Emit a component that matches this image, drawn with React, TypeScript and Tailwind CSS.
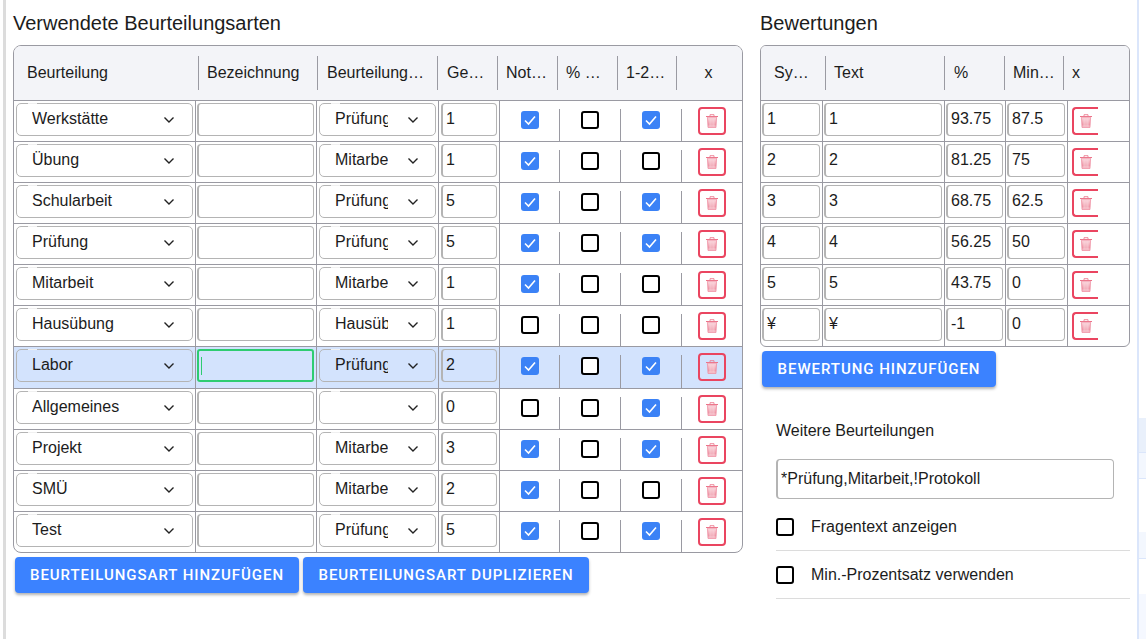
const selectRows = [
  { name: "Werkstätte", type: "Prüfung", weight: "1", a: true, b: false, c: true },
  { name: "Übung", type: "Mitarbeit", weight: "1", a: true, b: false, c: false },
  { name: "Schularbeit", type: "Prüfung", weight: "5", a: true, b: false, c: true },
  { name: "Prüfung", type: "Prüfung", weight: "5", a: true, b: false, c: true },
  { name: "Mitarbeit", type: "Mitarbeit", weight: "1", a: true, b: false, c: false },
  { name: "Hausübung", type: "Hausübung", weight: "1", a: false, b: false, c: false },
  { name: "Labor", type: "Prüfung", weight: "2", a: true, b: false, c: true, active: true },
  { name: "Allgemeines", type: "", weight: "0", a: false, b: false, c: true },
  { name: "Projekt", type: "Mitarbeit", weight: "3", a: true, b: false, c: true },
  { name: "SMÜ", type: "Mitarbeit", weight: "2", a: true, b: false, c: false },
  { name: "Test", type: "Prüfung", weight: "5", a: true, b: false, c: true },
];

const gradeRows = [
  ["1", "1", "93.75", "87.5"],
  ["2", "2", "81.25", "75"],
  ["3", "3", "68.75", "62.5"],
  ["4", "4", "56.25", "50"],
  ["5", "5", "43.75", "0"],
  ["¥", "¥", "-1", "0"],
];

function Chevron() {
  return (
    <svg viewBox="0 0 12 8" className="w-[12px] h-[8px] shrink-0 text-[#222]" fill="none" stroke="currentColor" strokeWidth="1.4">
      <path d="M1.500 1.500 6 6l4.500-4.500" />
    </svg>
  );
}

function Trash() {
  return (
    <svg viewBox="0 0 12 14" className="w-[12px] h-[14px]">
      <defs>
        <linearGradient id="trashFill" x1="0" y1="0" x2="0" y2="1">
          <stop offset="0" stopColor="#fbd5dc" />
          <stop offset="0.7" stopColor="#ee98a8" />
          <stop offset="1" stopColor="#f8c6d0" />
        </linearGradient>
      </defs>
      <path d="M4 2V.7h4V2" fill="none" stroke="#ec7f93" strokeWidth=".9" />
      <path d="M0 2.500h12" stroke="#ec7389" strokeWidth="1" />
      <path d="M1.400 3.200h9.200l-.6 10.300H2z" fill="url(#trashFill)" stroke="#ee8a9d" strokeWidth=".7" />
      <path d="M4.100 4.500v7.800M6 4.500v7.800M7.900 4.500v7.800" stroke="#fbe3e7" strokeWidth=".7" />
    </svg>
  );
}

function Check({ on }: { on: boolean }) {
  if (!on) return <span className="block w-[18px] h-[18px] rounded-[3px] border-2 border-black bg-white" />;
  return (
    <span className="flex items-center justify-center w-[18px] h-[18px] rounded-[3px] bg-[#3b82f6]">
      <svg viewBox="0 0 18 18" className="w-[18px] h-[18px]" fill="none" stroke="#fff" strokeWidth="1.6">
        <path d="M4 9.500 7.500 13 14 5.500" />
      </svg>
    </span>
  );
}

function SelectBox({ value, narrow }: { value: string; narrow?: boolean }) {
  return (
    <div className="relative flex items-center h-[33px] w-full rounded-[5px] border border-[#b4b4b4] pb-[2px]">
      <span className="absolute -top-px left-[11px] w-[9px] h-px bg-white/80" />
      <span className={`block overflow-hidden whitespace-nowrap ml-[15px] ${narrow ? "w-[53px]" : "flex-1"}`}>{value || "\u00a0"}</span>
      <span className={`ml-auto mt-[2px] ${narrow ? "mr-[16px]" : "mr-[17px]"}`}><Chevron /></span>
    </div>
  );
}

function TextBox({ value, focused }: { value: string; focused?: boolean }) {
  if (focused) {
    return (
      <div className="flex items-center h-[33px] w-full rounded-[3px] border-2 border-[#2ecc71] pl-[2px]">
        <span className="block w-px h-[18px] bg-[#2ecc71]" />
      </div>
    );
  }
  return (
    <div className="flex items-center h-[33px] w-full rounded-[4px] border border-l-2 border-[#b4b4b4] pl-[3px] pb-[2px] whitespace-nowrap overflow-hidden">
      {value}
    </div>
  );
}

function TrashButton({ cut }: { cut?: boolean }) {
  return (
    <div className={`flex items-center justify-center h-[28px] border-2 border-[#ea4560] ${cut ? "w-[26px] rounded-l-[4px] border-r-0" : "w-[28px] rounded-[4px]"}`}>
      <Trash />
    </div>
  );
}

function HeadCell({ label, className }: { label: string; className: string }) {
  return (
    <div className={`flex items-center h-[34px] border-r border-[#9a9aa2] whitespace-nowrap ${className}`}>
      {label}
    </div>
  );
}

function BlueButton({ label, className }: { label: string; className: string }) {
  return (
    <button className={`h-[36px] rounded-[4px] bg-[#3b82ff] text-white text-[15px] font-medium tracking-[0.95px] shadow-[0_2px_3px_rgba(0,0,0,0.3)] font-['Roboto',sans-serif] ${className}`}>
      {label}
    </button>
  );
}

function CheckCell({ on, width }: { on: boolean; width: string }) {
  return (
    <div className={`h-full pt-[8px] ${width}`}>
      <div className="flex justify-center h-full pt-[2px] border-r border-[#9a9aa2]">
        <Check on={on} />
      </div>
    </div>
  );
}

export default function App() {
  return (
    <div className="flex h-[639px] w-[1146px] overflow-hidden bg-white text-[16px] text-[#1c1c1c] font-['Liberation_Sans',Arial,sans-serif]">
      <div className="w-[3px] shrink-0" />
      <div className="w-[3px] shrink-0 bg-[#dcdcdc]" />
      <div className="flex w-[1131px] shrink-0 pl-[7px] pt-[12px]">
        <section className="w-[730px] shrink-0">
          <h2 className="text-[20px] leading-[23px] mb-[10px]">Verwendete Beurteilungsarten</h2>
          <div className="rounded-[8px] border border-[#9a9aa2] overflow-hidden">
            <div className="flex items-center h-[55px] bg-[#f3f4f8] border-b border-[#9a9aa2]">
              <HeadCell label="Beurteilung" className="w-[185px] pl-[13px]" />
              <HeadCell label="Bezeichnung" className="w-[119px] pl-[8px]" />
              <HeadCell label="Beurteilung…" className="w-[120px] pl-[9px]" />
              <HeadCell label="Ge…" className="w-[60px] pl-[9px]" />
              <HeadCell label="Not…" className="w-[60px] pl-[8px]" />
              <HeadCell label="% …" className="w-[60px] pl-[8px]" />
              <HeadCell label="1-2…" className="w-[59px] pl-[8px]" />
              <div className="flex-1 text-center pr-[2px]">x</div>
            </div>
            {selectRows.map((r, i) => (
              <div
                key={r.name}
                className={`flex ${i === selectRows.length - 1 ? "h-[40px]" : r.active ? "h-[42px] border-b border-[#9a9aa2]" : "h-[41px] border-b border-[#9a9aa2]"} ${r.active ? "bg-[#d3e3fd]" : ""}`}
              >
                <div className="flex items-start w-[182px] h-full border-r border-[#9a9aa2] px-[2px] pt-[2px]">
                  <SelectBox value={r.name} />
                </div>
                <div className="flex items-start w-[121px] h-full border-r border-[#9a9aa2] pl-[1px] pr-[2px] pt-[2px]">
                  <TextBox value="" focused={r.active} />
                </div>
                <div className="flex items-start w-[122px] h-full border-r border-[#9a9aa2] px-[2px] pt-[2px]">
                  <SelectBox value={r.type} narrow />
                </div>
                <div className="flex items-start w-[61px] h-full border-r border-[#9a9aa2] pl-[2px] pr-[2px] pt-[2px]">
                  <TextBox value={r.weight} />
                </div>
                <CheckCell on={r.a} width="w-[60px]" />
                <CheckCell on={r.b} width="w-[61px]" />
                <CheckCell on={r.c} width="w-[61px]" />
                <div className="flex-1 flex justify-center pt-[6px]">
                  <TrashButton />
                </div>
              </div>
            ))}
          </div>
          <div className="flex gap-[4px] pl-[2px] mt-[4px]">
            <BlueButton label="BEURTEILUNGSART HINZUFÜGEN" className="w-[284px]" />
            <BlueButton label="BEURTEILUNGSART DUPLIZIEREN" className="w-[286px]" />
          </div>
        </section>

        <section className="ml-[17px] w-[370px] shrink-0">
          <h2 className="text-[20px] leading-[23px] mb-[10px]">Bewertungen</h2>
          <div className="rounded-[6px] border border-[#9a9aa2] overflow-hidden">
            <div className="flex items-center h-[55px] bg-[#f3f4f8] border-b border-[#9a9aa2]">
              <HeadCell label="Sy…" className="w-[65px] pl-[13px]" />
              <HeadCell label="Text" className="w-[119px] pl-[8px]" />
              <HeadCell label="%" className="w-[60px] pl-[9px]" />
              <HeadCell label="Min…" className="w-[59px] pl-[8px]" />
              <div className="flex-1 pl-[8px]">x</div>
            </div>
            {gradeRows.map((r, i) => (
              <div key={i} className={`flex ${i < gradeRows.length - 1 ? "h-[41px] border-b border-[#9a9aa2]" : "h-[40px]"}`}>
                <div className="flex items-start w-[62px] h-full border-r border-[#9a9aa2] pl-[1px] pr-[2px] pt-[2px]"><TextBox value={r[0]} /></div>
                <div className="flex items-start w-[122px] h-full border-r border-[#9a9aa2] pl-[1px] pr-[2px] pt-[2px]"><TextBox value={r[1]} /></div>
                <div className="flex items-start w-[61px] h-full border-r border-[#9a9aa2] pl-[1px] pr-[2px] pt-[2px]"><TextBox value={r[2]} /></div>
                <div className="flex items-start w-[62px] h-full border-r border-[#9a9aa2] pl-[1px] pr-[2px] pt-[2px]"><TextBox value={r[3]} /></div>
                <div className="pl-[4px] pt-[6px]"><TrashButton cut /></div>
              </div>
            ))}
          </div>
          <div className="pl-[2px] mt-[4px]">
            <BlueButton label="BEWERTUNG HINZUFÜGEN" className="w-[234px]" />
          </div>
          <div className="pl-[16px]">
            <p className="mt-[35px] leading-[18px]">Weitere Beurteilungen</p>
            <div className="mt-[19px] flex items-center w-[338px] h-[40px] rounded-[4px] border border-l-2 border-[#b4b4b4] pl-[3px]">
              *Prüfung,Mitarbeit,!Protokoll
            </div>
            <div className="mt-[4px] flex items-center h-[48px] border-b border-[#dcdcdc] gap-[17px]">
              <Check on={false} />
              <span>Fragentext anzeigen</span>
            </div>
            <div className="flex items-center h-[48px] border-b border-[#dcdcdc] gap-[17px]">
              <Check on={false} />
              <span>Min.-Prozentsatz verwenden</span>
            </div>
          </div>
        </section>
      </div>

      {/* edge of the page behind the dialog */}
      <div className="flex flex-col flex-1 border-l-2 border-[#dbe6fb]">
        <div className="h-[418px]" />
        <div className="h-[34px] bg-[#e9f0fb]" />
        <div className="h-[27px] bg-[#f3f7fe] border-y border-[#dbe6fb]" />
        <div className="h-[53px]" />
        <div className="h-[27px] bg-[#f3f7fe] border-b border-[#dbe6fb]" />
        <div className="h-[35px]" />
        <div className="flex-1 bg-[#f5f8ff]" />
      </div>
    </div>
  );
}
